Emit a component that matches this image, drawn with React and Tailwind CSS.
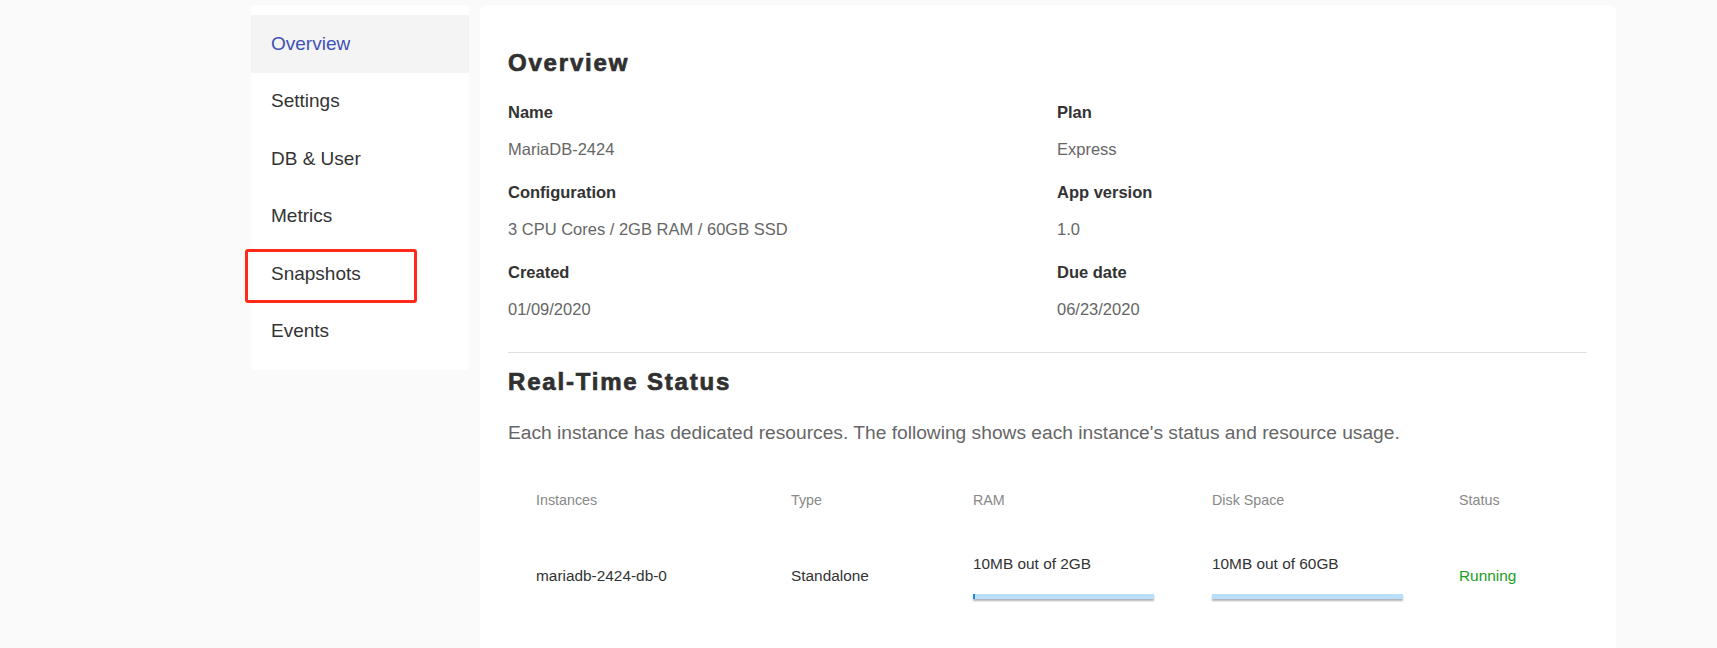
import React from "react";

const navItems = ["Overview", "Settings", "DB & User", "Metrics", "Snapshots", "Events"];

const details = [
  ["Name", "MariaDB-2424", "Plan", "Express"],
  ["Configuration", "3 CPU Cores / 2GB RAM / 60GB SSD", "App version", "1.0"],
  ["Created", "01/09/2020", "Due date", "06/23/2020"],
];

function Field({ label, value }) {
  return (
    <div>
      <div className="h-[20px] leading-[20px] text-[16.5px] font-bold text-[#333]">{label}</div>
      <div className="mt-[17px] h-[20px] leading-[20px] text-[16.5px] text-[#666]">{value}</div>
    </div>
  );
}

function UsageBar({ text, width, tick }) {
  return (
    <div>
      <div className="h-[20px] leading-[20px] text-[15.4px] text-[#333]">{text}</div>
      <div
        className={`mt-[20px] h-[5px] bg-[#bbdefb] shadow-[0_2px_2px_rgba(0,0,0,0.3)] ${width}`}
      >
        {tick && <div className="h-full w-[2px] bg-[#1e88e5]" />}
      </div>
    </div>
  );
}

export default function App() {
  return (
    <div className="min-h-[648px] bg-[#fafafa] font-['Liberation_Sans',Arial,sans-serif] overflow-hidden">
      <div className="flex items-start gap-[11px] pl-[251px] pt-[5px]">
        {/* SIDEBAR */}
        <div className="relative w-[218px] bg-white py-[10px]">
          {navItems.map((item, i) => (
            <div
              key={item}
              className={`h-[57.5px] flex items-center pl-[20px] text-[19px] ${
                i === 0 ? "bg-[#f4f4f4] text-[#3f51b5]" : "text-[#333]"
              }`}
            >
              {item}
            </div>
          ))}
          {/* annotation box */}
          <div className="absolute left-[-6px] top-[244px] w-[172px] h-[54px] border-[3.5px] border-[#ff2a1a] rounded-[3px]" />
        </div>

        {/* MAIN CARD */}
        <div className="w-[1136px] min-h-[660px] bg-white rounded-t-[6px] pt-[42px] pl-[28px] pr-[29px]">
          <h1 className="h-[32px] leading-[32px] text-[24px] font-bold tracking-[1.8px] text-[#303030] [-webkit-text-stroke:0.7px_#303030]">
            Overview
          </h1>

          <div className="mt-[23px] grid grid-cols-[549px_1fr] gap-y-[23px]">
            {details.map(([l1, v1, l2, v2]) => (
              <React.Fragment key={l1}>
                <Field label={l1} value={v1} />
                <Field label={l2} value={v2} />
              </React.Fragment>
            ))}
          </div>

          <div className="mt-[33px] border-t border-[#e0e0e0]" />

          <h2 className="mt-[13px] h-[32px] leading-[32px] text-[24px] font-bold tracking-[1.8px] text-[#303030] [-webkit-text-stroke:0.7px_#303030]">
            Real-Time Status
          </h2>
          <p className="mt-[22px] h-[26px] leading-[26px] text-[19.2px] text-[#666]">
            Each instance has dedicated resources. The following shows each instance's status and resource usage.
          </p>

          {/* TABLE */}
          <div className="mt-[44px] pl-[28px]">
            <div className="grid grid-cols-[255px_182px_239px_247px_1fr] h-[20px] leading-[20px] text-[14.3px] text-[#888]">
              <div>Instances</div>
              <div>Type</div>
              <div>RAM</div>
              <div>Disk Space</div>
              <div>Status</div>
            </div>
            <div className="mt-[22px] h-[88px] grid grid-cols-[255px_182px_239px_247px_1fr] items-center text-[15.4px] text-[#333]">
              <div>mariadb-2424-db-0</div>
              <div>Standalone</div>
              <UsageBar text="10MB out of 2GB" width="w-[181px]" tick />
              <UsageBar text="10MB out of 60GB" width="w-[191px]" />
              <div className="text-[#1b9e1b]">Running</div>
            </div>
          </div>
        </div>
      </div>
    </div>
  );
}
